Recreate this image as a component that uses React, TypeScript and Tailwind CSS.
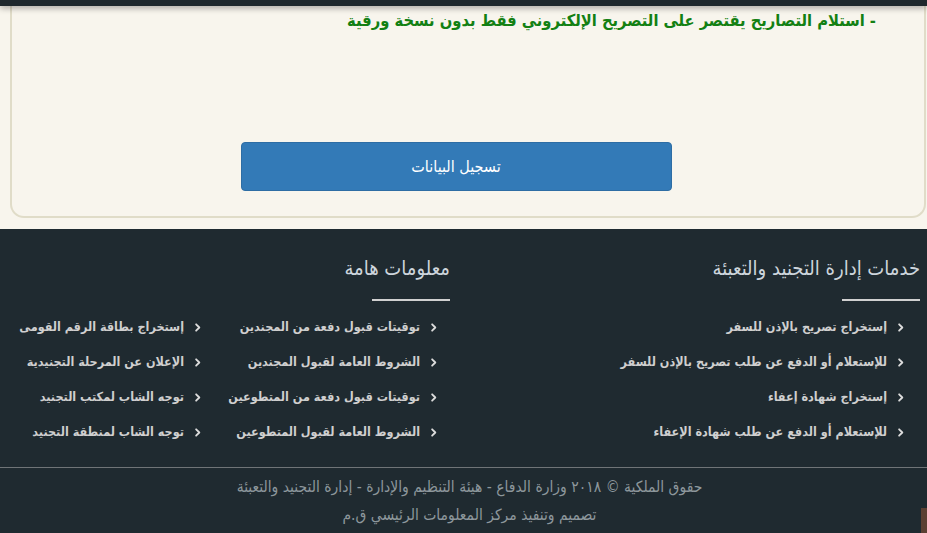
const serviceLinks = [
  "إستخراج تصريح بالإذن للسفر",
  "للإستعلام أو الدفع عن طلب تصريح بالإذن للسفر",
  "إستخراج شهادة إعفاء",
  "للإستعلام أو الدفع عن طلب شهادة الإعفاء",
];

const infoLinks = [
  "توقيتات قبول دفعة من المجندين",
  "إستخراج بطاقة الرقم القومى",
  "الشروط العامة لقبول المجندين",
  "الإعلان عن المرحلة التجنيدية",
  "توقيتات قبول دفعة من المتطوعين",
  "توجه الشاب لمكتب التجنيد",
  "الشروط العامة لقبول المتطوعين",
  "توجه الشاب لمنطقة التجنيد",
];

function Chevron() {
  return (
    <svg viewBox="0 0 24 24" className="h-[11px] w-[11px] shrink-0" fill="none" stroke="#dcdcdc" strokeWidth={4} strokeLinecap="round" strokeLinejoin="round">
      <path d="M9 5l7 7-7 7" />
    </svg>
  );
}

function FooterLink({ label }: { label: string }) {
  return (
    <li className="flex h-[35px] items-center gap-[8px]">
      <Chevron />
      <span className="whitespace-nowrap text-[12.5px] font-bold text-[#cfcfcf]">{label}</span>
    </li>
  );
}

function FooterHeading({ title }: { title: string }) {
  return (
    <div>
      <h3 className="h-[28px] text-[20px] leading-[28px] text-[#cdd5dc]">{title}</h3>
      <div className="mt-[17px] h-[2px] w-[78px] bg-[#d0d0d0]" />
    </div>
  );
}

export default function App() {
  return (
    <div
      dir="rtl"
      className="h-[533px] overflow-hidden bg-[#f8f5ed] font-['DejaVu_Sans_Condensed','DejaVu_Sans',sans-serif]"
    >
      <div className="relative h-[6px] bg-[#1f292e] shadow-[0_2px_6px_rgba(0,0,0,0.35)]" />

      <div className="ml-[10px] mr-[1px] -mt-[6px] h-[218px] rounded-b-[14px] border-x-2 border-b-2 border-[#e0dcc8] bg-[#f8f5ed]">
        <p className="pr-[48px] pt-[11px] text-[16.4px] font-bold leading-[20px] text-[#138013]">
          - استلام التصاريح يقتصر على التصريح الإلكتروني فقط بدون نسخة ورقية
        </p>
        <div className="flex justify-center pr-[24px] pt-[111px]">
          <button
            type="button"
            className="h-[49px] w-[431px] rounded-[4px] border border-[#2e6da4] bg-[#337ab7] text-[16px] text-white"
          >
            تسجيل البيانات
          </button>
        </div>
      </div>

      <footer className="mt-[11px] h-[304px] bg-[#1f2a30]">
        <div className="flex h-[238px] pt-[25px]">
          <div className="w-[463px] pr-[7px]">
            <FooterHeading title="خدمات إدارة التجنيد والتعبئة" />
            <ul className="mt-[9px] pr-[14px]">
              {serviceLinks.map((label) => (
                <FooterLink key={label} label={label} />
              ))}
            </ul>
          </div>
          <div className="w-[464px] pr-[14px]">
            <FooterHeading title="معلومات هامة" />
            <ul className="mt-[9px] grid grid-cols-[236px_1fr] pr-[11px]">
              {infoLinks.map((label) => (
                <FooterLink key={label} label={label} />
              ))}
            </ul>
          </div>
        </div>

        <div className="h-px bg-[#6f7477]" />

        <div className="relative pl-[12px] pt-[5px] text-center text-[15.5px] leading-[28px] text-[#8d979c]">
          <p>حقوق الملكية © ٢٠١٨ وزارة الدفاع - هيئة التنظيم والإدارة - إدارة التجنيد والتعبئة</p>
          <p>تصميم وتنفيذ مركز المعلومات الرئيسي ق.م</p>
          <span className="absolute left-[921px] top-[40px] h-[30px] w-[10px] bg-[#5c4033]" />
        </div>
      </footer>
    </div>
  );
}
